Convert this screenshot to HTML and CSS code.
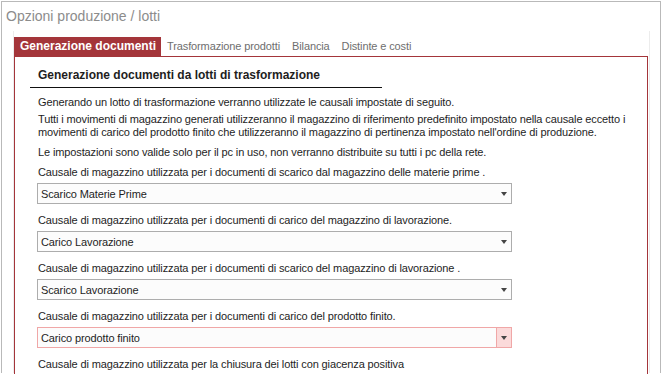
FILE: index.html
```html
<!DOCTYPE html>
<html lang="it">
<head>
    <meta charset="UTF-8">
    <title>Opzioni produzione / lotti</title>
    <link rel="stylesheet" href="styles.css">
</head>
<body>
    <div class="window">
        <div class="title">Opzioni produzione / lotti</div>

        <div class="tabs-area">
            <div class="tabbar">
                <div class="tab active">Generazione documenti</div>
                <div class="tab">Trasformazione prodotti</div>
                <div class="tab">Bilancia</div>
                <div class="tab">Distinte e costi</div>
            </div>

            <div class="panel">
                <div class="section-title">Generazione documenti da lotti di trasformazione</div>

                <p class="info first">Generando un lotto di trasformazione verranno utilizzate le causali impostate di seguito.</p>
                <p class="info">Tutti i movimenti di magazzino generati utilizzeranno il magazzino di riferimento predefinito impostato nella causale eccetto i movimenti di carico del prodotto finito che utilizzeranno il magazzino di pertinenza impostato nell'ordine di produzione.</p>
                <p class="info last">Le impostazioni sono valide solo per il pc in uso, non verranno distribuite su tutti i pc della rete.</p>

                <div class="field">
                    <label>Causale di magazzino utilizzata per i documenti di scarico dal magazzino delle materie prime .</label>
                    <div class="combo"><span>Scarico Materie Prime</span><span class="arrow"></span></div>
                </div>

                <div class="field">
                    <label>Causale di magazzino utilizzata per i documenti di carico del magazzino di lavorazione.</label>
                    <div class="combo"><span>Carico Lavorazione</span><span class="arrow"></span></div>
                </div>

                <div class="field">
                    <label>Causale di magazzino utilizzata per i documenti di scarico del magazzino di lavorazione .</label>
                    <div class="combo"><span>Scarico Lavorazione</span><span class="arrow"></span></div>
                </div>

                <div class="field">
                    <label>Causale di magazzino utilizzata per i documenti di carico del prodotto finito.</label>
                    <div class="combo hover"><span>Carico prodotto finito</span><span class="arrow"></span></div>
                </div>

                <div class="field">
                    <label>Causale di magazzino utilizzata per la chiusura dei lotti con giacenza positiva</label>
                </div>
            </div>
        </div>
    </div>
</body>
</html>
```

FILE: styles.css
```css
html, body {
    margin: 0;
    padding: 0;
    height: 100%;
    overflow: hidden;
    background-color: #fff;
}

body {
    font-family: 'Liberation Sans', Arial, sans-serif;
    font-size: 11px;
    letter-spacing: -0.12px;
    color: #1e1e1e;
}

.window {
    margin: 1px 1px 0 1px;
    height: 372px;
    border: 1px solid #b9b9b9;
    border-bottom: none;
    box-sizing: border-box;
}

.title {
    height: 29px;
    line-height: 28px;
    padding-left: 4px;
    font-size: 14px;
    letter-spacing: 0;
    color: #8c8c8c;
}

.tabs-area {
    margin-left: 11px;
    margin-right: 10px;
    padding-top: 6px;
    border-left: 1px solid #ececec;
    border-right: 1px solid #ececec;
    height: 336px;
}

.tabbar {
    display: flex;
    height: 19px;
}

.tab {
    padding: 0 6px;
    line-height: 19px;
    color: #6e6e6e;
}

.tab.active {
    background-color: #a4353a;
    color: #fff;
    font-weight: bold;
    font-size: 12px;
    letter-spacing: 0;
    padding: 0 5px 0 6px;
}

.panel {
    border: 1px solid #a4353a;
    border-bottom: none;
    margin-right: 1px;
    height: 317px;
    padding: 0 0 0 23px;
}

.section-title {
    font-weight: bold;
    font-size: 12px;
    letter-spacing: 0;
    height: 30px;
    line-height: 36px;
    width: 344px;
    margin-left: -8px;
    padding-left: 8px;
    border-bottom: 1px solid #111;
}

.info {
    margin: 4px 0 0 0;
    line-height: 13px;
    padding-right: 8px;
}

.info.first {
    margin-top: 8px;
}

.info.last {
    margin-top: 7px;
}

.field {
    margin-top: 8px;
}

.info.last + .field {
    margin-top: 5px;
}

.field label {
    display: block;
    line-height: 16px;
    margin-bottom: 3px;
}

.combo {
    width: 475px;
    height: 21px;
    margin-left: -1px;
    border: 1px solid #adadad;
    box-sizing: border-box;
    background-color: #fcfcfc;
    display: flex;
    justify-content: space-between;
    align-items: center;
    padding-left: 3px;
}

.arrow {
    width: 14px;
    height: 19px;
    display: flex;
    align-items: center;
    justify-content: center;
}

.arrow::before {
    content: "";
    border-left: 3px solid transparent;
    border-right: 3px solid transparent;
    border-top: 4px solid #444;
}

.combo.hover {
    border-color: #f0a7a7;
}

.combo.hover .arrow {
    background-color: #fbdada;
    border-left: 1px solid #f0a7a7;
}
```
